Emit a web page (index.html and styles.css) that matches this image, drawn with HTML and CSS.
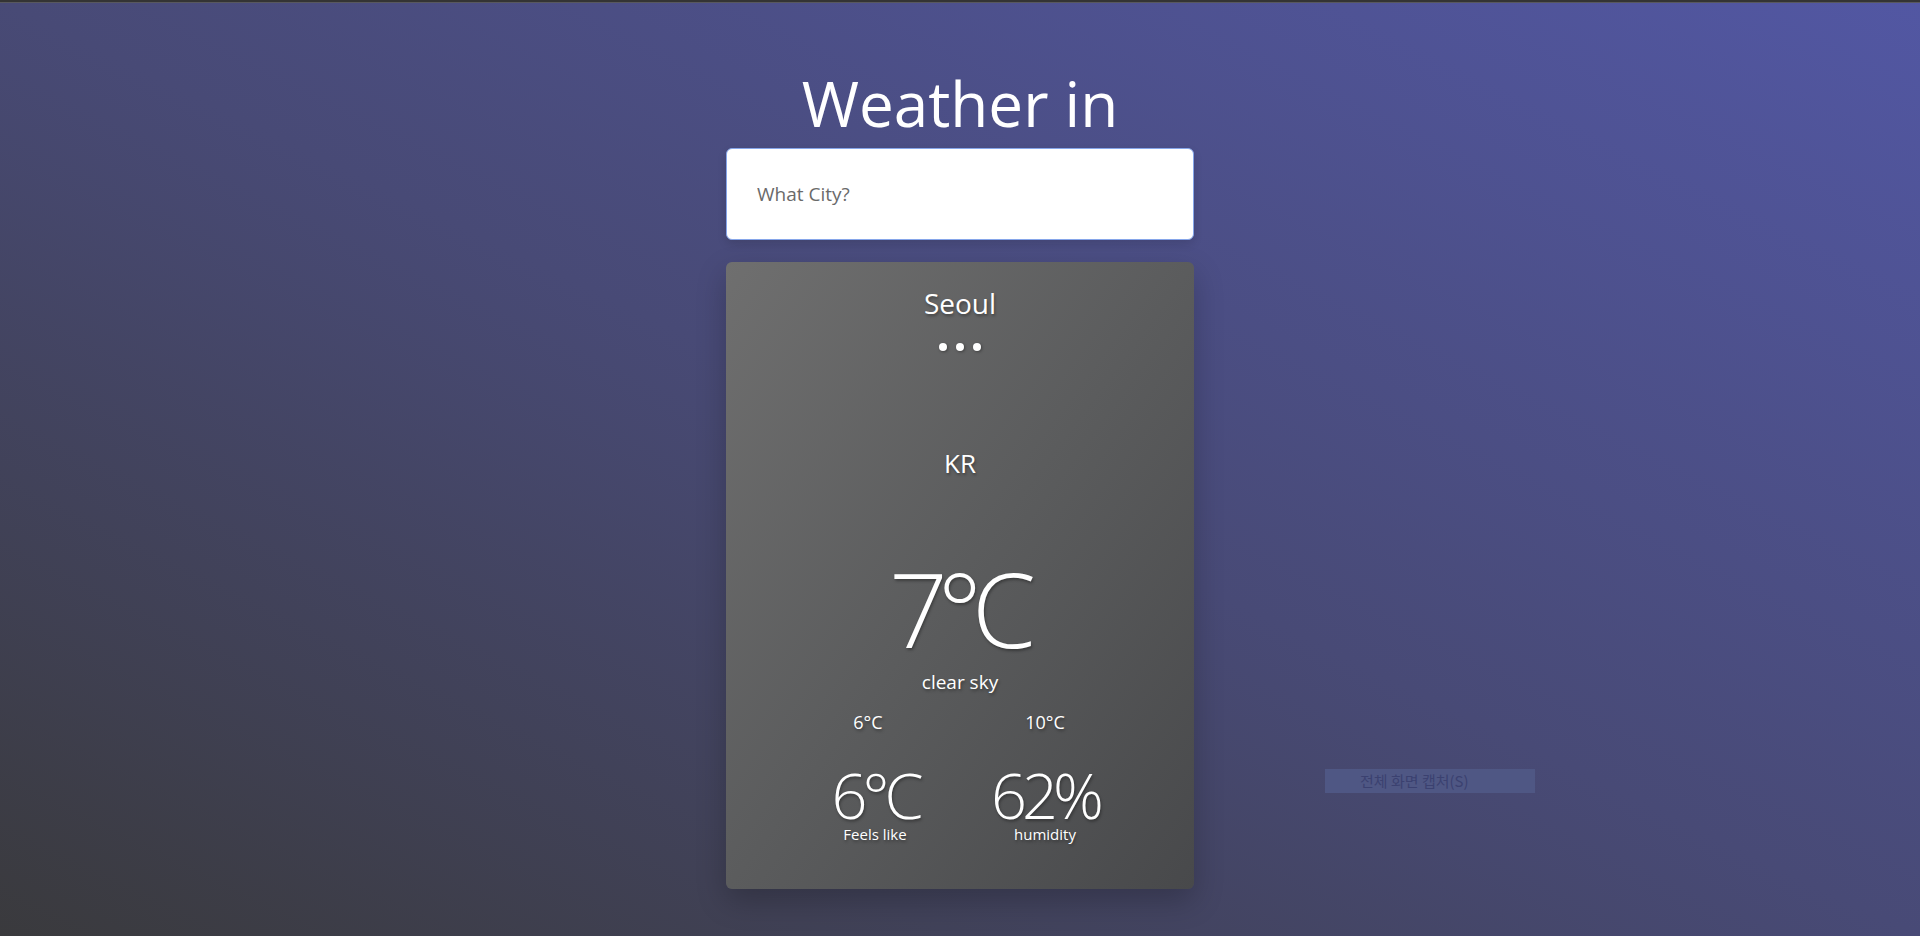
FILE: index.html
```html
<!DOCTYPE html>
<html lang="en">
<head>
<meta charset="utf-8">
<title>Weather</title>
<link rel="stylesheet" href="styles.css">
</head>
<body>
<div class="topbar"></div>
<main class="app">
  <h1 class="title">Weather in</h1>
  <input class="search" type="text" placeholder="What City?">
  <section class="card">
    <div class="city">Seoul</div>
    <div class="dots"><span></span><span></span><span></span></div>
    <div class="country">KR</div>
    <div class="temp">7°C</div>
    <div class="desc">clear sky</div>
    <div class="pair minmax">
      <div>6°C</div>
      <div>10°C</div>
    </div>
    <div class="pair stats">
      <div class="stat">
        <div class="stat-value">6°C</div>
        <div class="stat-label">Feels like</div>
      </div>
      <div class="stat">
        <div class="stat-value">62%</div>
        <div class="stat-label">humidity</div>
      </div>
    </div>
  </section>
</main>
<div class="capture-tip">전체 화면 캡처(S)</div>
</body>
</html>
```

FILE: styles.css
```css
html, body {
  margin: 0;
  padding: 0;
}

body {
  min-height: 936px;
  background: linear-gradient(to top right, #3a3a3d 0%, #484a76 50%, #5257a3 100%);
  font-family: "Open Sans", "Noto Sans CJK KR", sans-serif;
  color: #fff;
  overflow: hidden;
  position: relative;
}

.topbar {
  height: 2px;
  background: #343434;
  border-bottom: 1px solid #58585e;
}

.app {
  display: flex;
  flex-direction: column;
  align-items: center;
}

.title {
  margin: 65px 0 0;
  font-size: 62px;
  line-height: 70px;
  font-weight: 400;
  color: #fff;
}

.search {
  box-sizing: border-box;
  margin-top: 10px;
  width: 468px;
  height: 92px;
  border: 1px solid #86a6ea;
  border-radius: 6px;
  padding: 0 0 0 30px;
  font-family: "Open Sans", sans-serif;
  font-size: 19px;
  color: #333;
  background: #fff;
  outline: none;
  box-shadow: 0 4px 10px rgba(0, 0, 0, 0.12);
}

.search::placeholder {
  color: #6a6a6a;
}

.card {
  box-sizing: border-box;
  margin-top: 22px;
  width: 468px;
  height: 627px;
  border-radius: 6px;
  background: linear-gradient(to bottom right, #6f6f6f 0%, #5b5c5d 50%, #48494b 100%);
  box-shadow: 0 12px 30px rgba(0, 0, 0, 0.22);
  padding-top: 24px;
  display: flex;
  flex-direction: column;
  align-items: center;
  text-shadow: 1px 2px 3px rgba(0, 0, 0, 0.35);
}

.city {
  font-size: 28px;
  line-height: 34px;
}

.dots {
  margin-top: 23px;
  display: flex;
  gap: 9px;
}

.dots span {
  width: 8px;
  height: 8px;
  border-radius: 50%;
  background: #fff;
  box-shadow: 1px 1px 3px rgba(0, 0, 0, 0.35);
}

.country {
  margin-top: 96px;
  font-size: 26px;
  line-height: 32px;
}

.temp {
  margin-top: 81px;
  font-size: 103px;
  line-height: 96px;
  font-weight: 300;
  letter-spacing: -10px;
  text-indent: -5px;
}

.desc {
  margin-top: 15px;
  font-size: 19px;
  line-height: 22px;
}

.pair {
  display: grid;
  grid-template-columns: 170px 170px;
  justify-items: center;
}

.minmax {
  margin-top: 18px;
  font-size: 18px;
  line-height: 22px;
}

.minmax div:first-child {
  margin-right: 14px;
}

.stats {
  margin-top: 37px;
}

.stat {
  display: flex;
  flex-direction: column;
  align-items: center;
}

.stat-value {
  font-size: 63px;
  line-height: 50px;
  font-weight: 300;
  letter-spacing: -5px;
}

.stat-label {
  margin-top: 5px;
  font-size: 15px;
  line-height: 18px;
}

.capture-tip {
  position: absolute;
  left: 1325px;
  top: 769px;
  width: 210px;
  height: 24px;
  box-sizing: border-box;
  padding-left: 35px;
  background: #4f5784;
  color: #3b4170;
  font-family: "Noto Sans CJK KR", sans-serif;
  font-size: 15px;
  line-height: 24px;
  text-shadow: none;
}
```
